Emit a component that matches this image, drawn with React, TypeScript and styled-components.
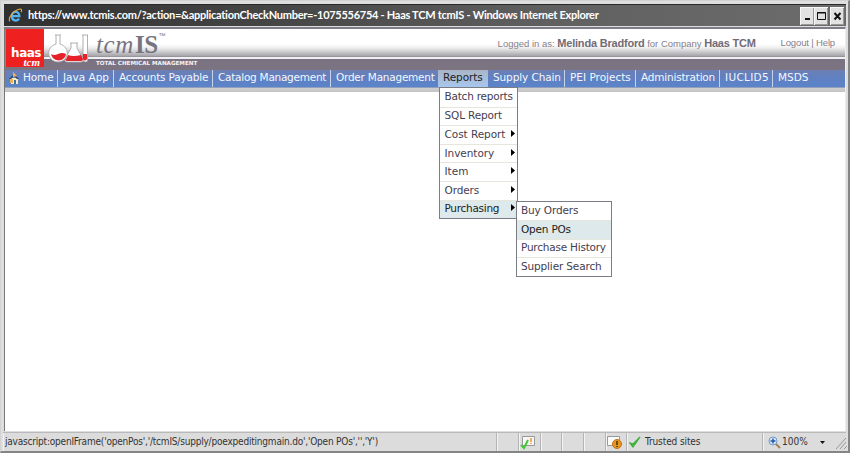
import React from "react";
import styled, { createGlobalStyle } from "styled-components";

const Global = createGlobalStyle`
  * { box-sizing: border-box; }
  html, body { margin: 0; padding: 0; overflow: hidden; background: #e0e0e0; }
`;

const Window = styled.div`
  width: 850px;
  height: 453px;
  display: flex;
  flex-direction: column;
  background: #dedede;
  border: 1px solid #d2d2d2;
  border-right: 2px solid #858585;
  border-bottom: 2px solid #858585;
  padding: 3px 2px 0 3px;
  overflow: hidden;
  white-space: nowrap;
  font-family: "DejaVu Sans", Verdana, sans-serif;
`;

const TitleBar = styled.header`
  height: 22px;
  flex: none;
  display: flex;
  align-items: center;
  padding: 0 2px 0 4px;
  background: linear-gradient(90deg, #303030, #444 30%, #606060 65%, #6c6c6c);
  border-top: 1px solid #292929;
`;

const WindowTitle = styled.h1<{ $track: number }>`
  margin: 0 auto 1px 5px;
  font: bold 11px/20px Lato, sans-serif;
  letter-spacing: ${(p) => p.$track}px;
  color: #fff;
`;

const WindowButton = styled.button<{ $gap?: boolean }>`
  width: 14px;
  height: 18px;
  padding: 0;
  margin-left: ${(p) => (p.$gap ? 2 : 0)}px;
  border: 0;
  background: #e2e2e2;
  box-shadow: inset 1px 1px #f8f8f8, inset -1px -1px #999;
  display: flex;
  align-items: center;
  justify-content: center;
`;

const Viewport = styled.main`
  flex: none;
  height: 404px;
  margin-top: 1px;
  border-top: 2px solid #807b88;
  border-left: 1px solid #777;
  border-right: 1px solid #ededed;
  background: #fff;
`;

const Banner = styled.div`
  height: 41px;
  display: flex;
  background: linear-gradient(180deg, #fff 0, #fff 15px, #eee 19px, #a5a5aa 27px, #8a858d 28px, #f0eff2 28px, #f0eff2 30px, #7a7282 30px, #7c7480 100%);
`;

const HaasLogo = styled.div`
  width: 39px;
  height: 38px;
  flex: none;
  background: #ef2020;
  border-left: 1px solid #8a858d;
  color: #fff;
  display: flex;
  flex-direction: column;
  align-items: flex-end;
  padding: 18px 3px 0 0;
`;

const HaasName = styled.b`
  font: bold 12px/12px "DejaVu Sans", sans-serif;
  letter-spacing: -0.5px;
`;

const HaasTcm = styled.i`
  margin-right: 1px;
  font: italic bold 11px/6px "Liberation Serif", serif;
`;

const Flasks = styled.svg`
  width: 42px;
  height: 34px;
  margin: 1px 0 0 3px;
  flex: none;
`;

const Brand = styled.div`
  width: 120px;
  margin-left: 6px;
  flex: none;
`;

const Wordmark = styled.div`
  height: 28px;
  margin-left: 1px;
  font: italic 25px/31px "Liberation Serif", serif;
  letter-spacing: 0.6px;
  color: #77747f;
  display: flex;

  b { font-style: normal; letter-spacing: -0.5px; margin-left: 1px; }
  sup { font: 7px/14px "Liberation Sans", sans-serif; margin-left: 1px; }
`;

const Tagline = styled.div`
  margin-left: 1px;
  font: bold 5.6px/12px "DejaVu Sans", sans-serif;
  letter-spacing: 0;
  color: #f4f3f5;
`;

const Session = styled.div`
  flex: 1;
  display: flex;
  justify-content: flex-end;
  padding-right: 10px;
  height: 28px;
  font: 9.5px/28px "Liberation Sans", Arial, sans-serif;
  color: #85808a;

  b { font-size: 11px; letter-spacing: -0.2px; color: #716b76; }
`;

const SessionUser = styled.span`
  width: 283px;
`;

const SessionLinks = styled.span`
  letter-spacing: -0.15px;
`;

const NavBar = styled.nav`
  height: 17px;
  padding-left: 1px;
  display: flex;
  background: linear-gradient(180deg, #6c7fb3 0, #6080c1 45%, #5b84ca 100%);
  box-shadow: 0 1px #92a0bb;
`;

const NavItem = styled.a<{ $width: number; $track: number; $active?: boolean; $line?: boolean }>`
  width: ${(p) => p.$width}px;
  flex: none;
  display: flex;
  padding-left: 5px;
  font-size: 10.5px;
  line-height: 15px;
  letter-spacing: ${(p) => p.$track}px;
  color: ${(p) => (p.$active ? "#222" : "#f4f7fc")};
  background: ${(p) => (p.$active ? "linear-gradient(180deg, #a9b5c6, #a7c7ee)" : "none")};
  border-right: ${(p) => (p.$line ? "1px solid #c7d3ea" : "0")};
`;

const HomeIcon = styled.svg`
  width: 11px;
  height: 13px;
  margin: 2px 3px 0 -2px;
`;

const Shelf = styled.div`
  height: 4px;
  margin-top: 1px;
  background: linear-gradient(180deg, #cfcfcf, #c4c4c4);
`;

const MenuArea = styled.div`
  position: relative;
`;

const Menu = styled.ul<{ $x: number; $y: number; $width: number }>`
  position: absolute;
  left: ${(p) => p.$x}px;
  top: ${(p) => p.$y}px;
  width: ${(p) => p.$width}px;
  margin: 0;
  padding: 0;
  list-style: none;
  background: #fff;
  border: 1px solid #7c7c84;
`;

const MenuItem = styled.li<{ $track: number; $active?: boolean }>`
  height: 18.6px;
  padding: 0 1px 2px 4.5px;
  display: flex;
  align-items: center;
  justify-content: space-between;
  font-size: 10.5px;
  line-height: 14px;
  letter-spacing: ${(p) => p.$track}px;
  color: ${(p) => (p.$active ? "#222" : "#454050")};
  background: ${(p) => (p.$active ? "#dde9ea" : "#fff")};

  & + & { border-top: 1px solid #e6e6dc; }
`;

const Arrow = styled.svg`
  width: 5px;
  height: 8px;
  flex: none;
`;

const StatusBar = styled.footer`
  flex: none;
  height: 18px;
  margin: 2px 0 0 -1px;
  display: flex;
  align-items: stretch;
  background: #dcdcdc;
  box-shadow: 0 -1px #b9b9b9;
  font: 10px/17px "DejaVu Sans Condensed", "DejaVu Sans", Tahoma, sans-serif;
  color: #333;
`;

const StatusCell = styled.div<{ $width: number }>`
  width: ${(p) => p.$width}px;
  flex: none;
  display: flex;
  align-items: center;
  border-right: 1px solid #b5b5b5;
  box-shadow: inset 1px 0 #f3f3f3;

  &:last-child { border-right: 0; }
`;

const StatusText = styled.span<{ $track: number; $indent: number }>`
  margin: 0 0 1px ${(p) => p.$indent}px;
  letter-spacing: ${(p) => p.$track}px;
`;

const StatusIcon = styled.svg<{ $indent: number }>`
  margin-left: ${(p) => p.$indent}px;
  flex: none;
`;

const navItems = [
  { label: "Home", width: 52, track: -0.1, line: true },
  { label: "Java App", width: 56, track: 0, line: true },
  { label: "Accounts Payable", width: 99, track: -0.19, line: true },
  { label: "Catalog Management", width: 118, track: -0.26, line: true },
  { label: "Order Management", width: 107, track: -0.23 },
  { label: "Reports", width: 50, track: -0.1, active: true },
  { label: "Supply Chain", width: 77, track: -0.1, line: true },
  { label: "PEI Projects", width: 71, track: 0, line: true },
  { label: "Administration", width: 84, track: -0.2, line: true },
  { label: "IUCLID5", width: 53, track: 0.3, line: true },
  { label: "MSDS", width: 50, track: 0 },
];

const reports = [
  { label: "Batch reports", track: -0.22 },
  { label: "SQL Report", track: -0.15 },
  { label: "Cost Report", track: -0.05, more: true },
  { label: "Inventory", track: -0.05, more: true },
  { label: "Item", track: 0, more: true },
  { label: "Orders", track: -0.1, more: true },
  { label: "Purchasing", track: -0.28, more: true, active: true },
];

const purchasing = [
  { label: "Buy Orders", track: -0.15 },
  { label: "Open POs", track: -0.2, active: true },
  { label: "Purchase History", track: -0.22 },
  { label: "Supplier Search", track: -0.14 },
];

const IeIcon = () => (
  <svg width="15" height="15" viewBox="0 0 15 15" fill="none">
    <path d="M3.800 8.200h7.600C11.400 2.500 3.800 2.500 3.800 8.200c0 5 5.700 5.400 7.200 2.400" stroke="#55b3ef" strokeWidth="2.200" />
    <path d="M2 13.200C-1 11 5.500 2.500 11 1.200c3-.7 3 1.300 2 3" stroke="#e6ad3d" strokeWidth="1.100" />
  </svg>
);

const Check = () => <path d="M1 7l3 4L11 1 4.200 8z" fill="#45ce3b" stroke="#3fae38" strokeWidth="1.300" />;

export default function App() {
  return (
    <>
      <Global />
      <Window>
        <TitleBar>
          <IeIcon />
          <WindowTitle $track={-0.27}>https://www.tcmis.com/?action=&amp;applicationCheckNumber=-1075556754 - Haas TCM tcmIS - Windows Internet Explorer</WindowTitle>
          <WindowButton aria-label="Minimize">
            <svg width="13" height="18"><path d="M4 12h5" stroke="#111" strokeWidth="2" /></svg>
          </WindowButton>
          <WindowButton aria-label="Maximize">
            <svg width="13" height="18"><path d="M2.500 5.500h8v7h-8zM2 6h9" fill="none" stroke="#111" /></svg>
          </WindowButton>
          <WindowButton aria-label="Close" $gap>
            <svg width="13" height="18"><path d="M3.500 6l6 6.500M9.500 6l-6 6.500" stroke="#111" strokeWidth="1.900" /></svg>
          </WindowButton>
        </TitleBar>
        <Viewport>
          <Banner>
            <HaasLogo>
              <HaasName>haas</HaasName>
              <HaasTcm>tcm</HaasTcm>
            </HaasLogo>
            <Flasks viewBox="0 0 42 34">
              <g fill="#fff" stroke="#aaa5ad" strokeWidth=".9">
                <path d="M8 5h6M9 5v9C-1 17-1 31 11 32c12-1 12-15 2-18V5" />
                <path d="M23 13h8M24 13v5l-6 11q-1 3 2 3h14q3 0 2-3l-6-11v-5" />
                <path d="M35 5h6M36 5v24q0 3 2.500 3t2-3V5" />
              </g>
              <path d="M4 24q3 2 7 0t8 0c-1 8-13 9-15 0zM21 25q5 2 13 0l2 4q0 2-2 2H20q-3-1-1-2zM36 24h4v5q-2 3-4 0z" fill="#e5222a" />
            </Flasks>
            <Brand>
              <Wordmark>tcm<b>IS</b><sup>™</sup></Wordmark>
              <Tagline>TOTAL CHEMICAL MANAGEMENT</Tagline>
            </Brand>
            <Session>
              <SessionUser>Logged in as: <b>Melinda Bradford</b> for Company <b>Haas TCM</b></SessionUser>
              <SessionLinks>Logout | Help</SessionLinks>
            </Session>
          </Banner>
          <NavBar>
            {navItems.map((n) => (
              <NavItem key={n.label} $width={n.width} $track={n.track} $active={n.active} $line={n.line}>
                {n.label === "Home" && (
                  <HomeIcon viewBox="0 0 11 13">
                    <path d="M2 6h7v6H2z" fill="#f6e9c4" />
                    <path d="M0 7l5-5 5 5H8L5 4 2 7z" fill="#27486e" />
                    <path d="M4 0l4 4-4 1zM1 7h3v4H1z" fill="#edb554" />
                    <path d="M5 8h2v4H5z" fill="#3672a4" />
                  </HomeIcon>
                )}
                {n.label}
              </NavItem>
            ))}
          </NavBar>
          <Shelf />
          <MenuArea>
            <Menu $x={434} $y={-5} $width={79}>
              {reports.map((m) => (
                <MenuItem key={m.label} $track={m.track} $active={m.active}>
                  {m.label}
                  {m.more && <Arrow viewBox="0 0 5 8"><path d="M0 0l4 3.500L0 7z" fill="#000" /></Arrow>}
                </MenuItem>
              ))}
            </Menu>
            <Menu $x={510.500} $y={108.500} $width={96}>
              {purchasing.map((m) => (
                <MenuItem key={m.label} $track={m.track} $active={m.active}>{m.label}</MenuItem>
              ))}
            </Menu>
          </MenuArea>
        </Viewport>
        <StatusBar>
          <StatusCell $width={494}>
            <StatusText $indent={2} $track={-0.2}>javascript:openIFrame('openPos','/tcmIS/supply/poexpeditingmain.do','Open POs','','Y')</StatusText>
          </StatusCell>
          <StatusCell $width={22} />
          <StatusCell $width={22}>
            <StatusIcon $indent={1} width="16" height="15" viewBox="0 0 16 15">
              <path d="M2.500 1.500h12v9h-12z" fill="#f7f7f7" stroke="#999" />
              <path d="M11 3v4M11 8v1" stroke="#e79a28" strokeWidth="1.500" />
              <path d="M1 10l3 3 4-8" fill="none" stroke="#42c83a" strokeWidth="2" />
            </StatusIcon>
          </StatusCell>
          <StatusCell $width={21} />
          <StatusCell $width={22} />
          <StatusCell $width={22} />
          <StatusCell $width={21}>
            <StatusIcon $indent={0} width="17" height="15" viewBox="0 0 17 15">
              <path d="M1.500 1.500h12v9h-12z" fill="#fafafa" stroke="#999" />
              <circle cx="11" cy="9" r="4.500" fill="#e7961e" stroke="#bf7416" />
              <path d="M11 6v4M11 11v1" stroke="#573507" strokeWidth="1.600" />
            </StatusIcon>
          </StatusCell>
          <StatusCell $width={136}>
            <StatusIcon $indent={2} width="13" height="13" viewBox="0 0 13 13"><Check /></StatusIcon>
            <StatusText $indent={3} $track={-0.1}>Trusted sites</StatusText>
          </StatusCell>
          <StatusCell $width={84}>
            <StatusIcon $indent={5} width="13" height="13" viewBox="0 0 13 13">
              <path d="M7 7l5 5" stroke="#a68252" strokeWidth="2" />
              <circle cx="5" cy="5" r="4" fill="#d9ebfb" stroke="#6b9bc7" />
              <path d="M5 2.500v5M2.500 5h5" stroke="#2456a8" strokeWidth="1.500" />
            </StatusIcon>
            <StatusText $indent={1} $track={0}>100%</StatusText>
            <StatusIcon $indent={12} width="5" height="3"><path d="M0 0h5L2.500 3z" fill="#111" /></StatusIcon>
            <StatusIcon $indent={10} width="12" height="14"><path d="M1 14L11 3M5 14l6-7M9 14l3-3" stroke="#999" /></StatusIcon>
          </StatusCell>
        </StatusBar>
      </Window>
    </>
  );
}
